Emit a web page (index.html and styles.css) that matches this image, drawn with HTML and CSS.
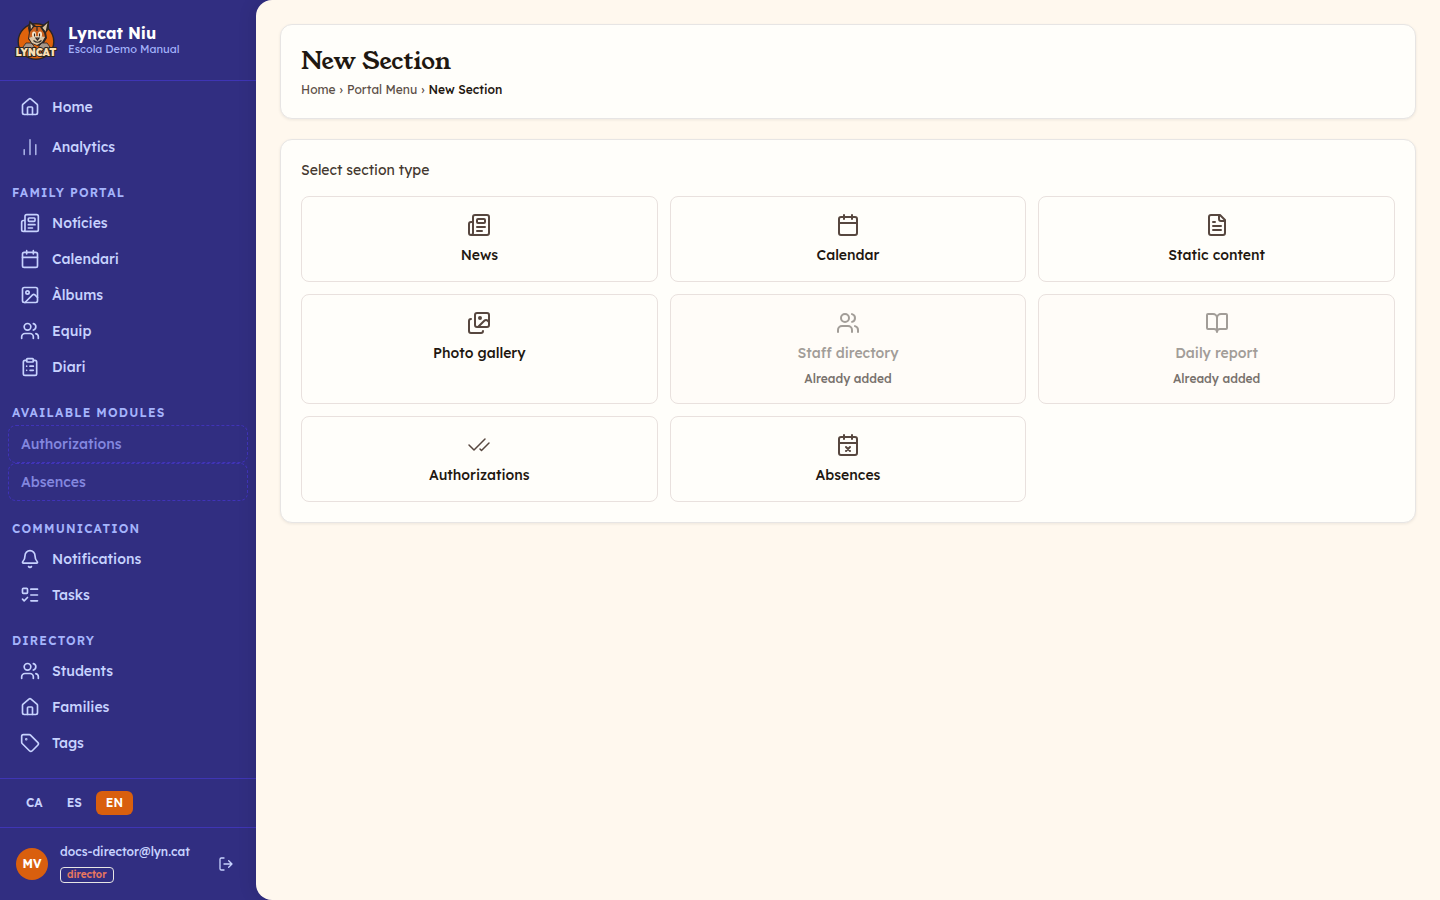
FILE: index.html
```html
<!DOCTYPE html>
<html lang="en">
<head>
    <meta charset="UTF-8">
    <meta name="viewport" content="width=device-width, initial-scale=1.0">
    <title>New Section - Lyncat Niu</title>
    <link rel="stylesheet" href="styles.css">
</head>
<body>
    <!-- Icon set -->
    <svg class="sprite" aria-hidden="true">
        <symbol id="i-home" viewBox="0 0 24 24"><path d="M15 21v-8a1 1 0 0 0-1-1h-4a1 1 0 0 0-1 1v8"/><path d="M3 10a2 2 0 0 1 .709-1.528l7-6a2 2 0 0 1 2.582 0l7 6A2 2 0 0 1 21 10v9a2 2 0 0 1-2 2H5a2 2 0 0 1-2-2z"/></symbol>
        <symbol id="i-chart" viewBox="0 0 24 24"><path stroke-width="1.5" d="M5 21v-6M12 21V3M19 21V9"/></symbol>
        <symbol id="i-news" viewBox="0 0 24 24"><path d="M15 18h-5M18 14h-8"/><path d="M4 22h16a2 2 0 0 0 2-2V4a2 2 0 0 0-2-2H8a2 2 0 0 0-2 2v16a2 2 0 0 1-4 0v-9a2 2 0 0 1 2-2h2"/><rect width="8" height="4" x="10" y="6" rx="1"/></symbol>
        <symbol id="i-calendar" viewBox="0 0 24 24"><path d="M8 2v4M16 2v4M3 10h18"/><rect width="18" height="18" x="3" y="4" rx="2"/></symbol>
        <symbol id="i-calendar-x" viewBox="0 0 24 24"><path d="M8 2v4M16 2v4M3 10h18M14 14l-4 4M10 14l4 4"/><rect width="18" height="18" x="3" y="4" rx="2"/></symbol>
        <symbol id="i-image" viewBox="0 0 24 24"><rect width="18" height="18" x="3" y="3" rx="2"/><circle cx="9" cy="9" r="2"/><path d="m21 15-3.086-3.086a2 2 0 0 0-2.828 0L6 21"/></symbol>
        <symbol id="i-images" viewBox="0 0 24 24"><path d="m22 11-1.296-1.296a2.4 2.4 0 0 0-3.408 0L11 16"/><path d="M4 8a2 2 0 0 0-2 2v10a2 2 0 0 0 2 2h10a2 2 0 0 0 2-2"/><circle cx="13" cy="7" r="1" fill="currentColor"/><rect width="14" height="14" x="8" y="2" rx="2"/></symbol>
        <symbol id="i-users" viewBox="0 0 24 24"><path d="M16 21v-2a4 4 0 0 0-4-4H6a4 4 0 0 0-4 4v2"/><path d="M16 3.128a4 4 0 0 1 0 7.744M22 21v-2a4 4 0 0 0-3-3.87"/><circle cx="9" cy="7" r="4"/></symbol>
        <symbol id="i-clipboard" viewBox="0 0 24 24"><rect width="8" height="4" x="8" y="2" rx="1"/><path d="M16 4h2a2 2 0 0 1 2 2v14a2 2 0 0 1-2 2H6a2 2 0 0 1-2-2V6a2 2 0 0 1 2-2h2M12 11h4M12 16h4M8 11h.01M8 16h.01"/></symbol>
        <symbol id="i-bell" viewBox="0 0 24 24"><path d="M10.268 21a2 2 0 0 0 3.464 0"/><path d="M3.262 15.326A1 1 0 0 0 4 17h16a1 1 0 0 0 .74-1.673C19.41 13.956 18 12.499 18 8A6 6 0 0 0 6 8c0 4.499-1.411 5.956-2.738 7.326"/></symbol>
        <symbol id="i-tasks" viewBox="0 0 24 24"><path d="M13 5h8M13 12h8M13 19h8M3 17l2 2 4-4"/><rect width="6" height="6" x="3" y="4" rx="1"/></symbol>
        <symbol id="i-tag" viewBox="0 0 24 24"><path d="M12.586 2.586A2 2 0 0 0 11.172 2H4a2 2 0 0 0-2 2v7.172a2 2 0 0 0 .586 1.414l8.704 8.704a2.426 2.426 0 0 0 3.42 0l6.58-6.58a2.426 2.426 0 0 0 0-3.42z"/><circle cx="7.5" cy="7.5" r=".5" fill="currentColor"/></symbol>
        <symbol id="i-file" viewBox="0 0 24 24"><path d="M15 2H6a2 2 0 0 0-2 2v16a2 2 0 0 0 2 2h12a2 2 0 0 0 2-2V7Z"/><path d="M14 2v4a2 2 0 0 0 2 2h4M10 9H8M16 13H8M16 17H8"/></symbol>
        <symbol id="i-book" viewBox="0 0 24 24"><path d="M12 7v14M3 18a1 1 0 0 1-1-1V4a1 1 0 0 1 1-1h5a4 4 0 0 1 4 4 4 4 0 0 1 4-4h5a1 1 0 0 1 1 1v13a1 1 0 0 1-1 1h-6a3 3 0 0 0-3 3 3 3 0 0 0-3-3z"/></symbol>
        <symbol id="i-checks" viewBox="0 0 24 24"><path stroke-width="1.5" d="M18 6 7 17l-5-5M22 10l-7.5 7.5L13 16"/></symbol>
        <symbol id="i-logout" viewBox="0 0 24 24"><path d="M9 21H5a2 2 0 0 1-2-2V5a2 2 0 0 1 2-2h4M16 17l5-5-5-5M21 12H9"/></symbol>
    </svg>

    <div class="app">
        <aside class="sidebar">
            <div class="brand">
                <svg class="logo" viewBox="0 0 40 40" role="img" aria-label="Lyncat">
                    <circle cx="20" cy="21.5" r="17.8" fill="#e0630c" stroke="#2b2523" stroke-width="1.4"/>
                    <!-- ears -->
                    <path d="M13.5.5 20 6l-7 7-1-5zM33 .5 24 7l5 7 4-5z" fill="#2b2523"/>
                    <path d="m14.5 3.5 3.5 4-3 3zM31.5 3l-5.5 5 3.5 4z" fill="#d8c0a0"/>
                    <!-- head -->
                    <path d="M17 6h8l5 6 1 6-3 5-6 3-6-2-4-5 1-7z" fill="#2b2523"/>
                    <path d="M18 7h6l4 6 1 4-3 4-5 3-5-2-3-4 1-6z" fill="#c9621f"/>
                    <path d="m13 18 5-2h5l6 1-3 5-5 3-5-2z" fill="#d9c4a6"/>
                    <ellipse cx="18" cy="14.5" rx="2" ry="3" fill="#f8e9cf"/>
                    <ellipse cx="24" cy="14.5" rx="2" ry="3" fill="#f8e9cf"/>
                    <path d="M18.5 13.5v3M23.5 13.5v3M20 18h3l-1.500 2zM17.5 20.5q4 3.500 8 0M21 7v4" fill="none" stroke="#2b2523" stroke-width="1.2"/>
                    <!-- paws -->
                    <path d="m7 27 3-4 5 0 3 3v3H7zM23 26l3-3h5l3 4v2H23z" fill="#a49588" stroke="#2b2523" stroke-width=".8"/>
                    <text class="logo-text" x="20" y="36" text-anchor="middle">LYNCAT</text>
                </svg>
                <div>
                    <div class="brand-name">Lyncat Niu</div>
                    <div class="brand-school">Escola Demo Manual</div>
                </div>
            </div>

            <nav class="nav">
                <div class="nav-group nav-main">
                    <a class="nav-link" href="#"><svg class="icon"><use href="#i-home"/></svg>Home</a>
                    <a class="nav-link" href="#"><svg class="icon"><use href="#i-chart"/></svg>Analytics</a>
                </div>
                <h2 class="nav-title">Family portal</h2>
                <div class="nav-group">
                    <a class="nav-link" href="#"><svg class="icon"><use href="#i-news"/></svg>Notícies</a>
                    <a class="nav-link" href="#"><svg class="icon"><use href="#i-calendar"/></svg>Calendari</a>
                    <a class="nav-link" href="#"><svg class="icon"><use href="#i-image"/></svg>Àlbums</a>
                    <a class="nav-link" href="#"><svg class="icon"><use href="#i-users"/></svg>Equip</a>
                    <a class="nav-link" href="#"><svg class="icon"><use href="#i-clipboard"/></svg>Diari</a>
                </div>
                <h2 class="nav-title">Available modules</h2>
                <div class="nav-group">
                    <a class="nav-link module" href="#">Authorizations</a>
                    <a class="nav-link module" href="#">Absences</a>
                </div>
                <h2 class="nav-title">Communication</h2>
                <div class="nav-group">
                    <a class="nav-link" href="#"><svg class="icon"><use href="#i-bell"/></svg>Notifications</a>
                    <a class="nav-link" href="#"><svg class="icon"><use href="#i-tasks"/></svg>Tasks</a>
                </div>
                <h2 class="nav-title">Directory</h2>
                <div class="nav-group">
                    <a class="nav-link" href="#"><svg class="icon"><use href="#i-users"/></svg>Students</a>
                    <a class="nav-link" href="#"><svg class="icon"><use href="#i-home"/></svg>Families</a>
                    <a class="nav-link" href="#"><svg class="icon"><use href="#i-tag"/></svg>Tags</a>
                </div>
            </nav>

            <div class="languages">
                <button type="button" class="lang">CA</button>
                <button type="button" class="lang">ES</button>
                <button type="button" class="lang active">EN</button>
            </div>

            <div class="user">
                <div class="avatar">MV</div>
                <div class="user-info">
                    <div class="user-email">docs-director@lyn.cat</div>
                    <span class="role">director</span>
                </div>
                <button type="button" class="logout" aria-label="Log out"><svg class="icon"><use href="#i-logout"/></svg></button>
            </div>
        </aside>

        <main class="content">
            <header class="card">
                <h1>New Section</h1>
                <nav class="breadcrumb" aria-label="Breadcrumb">
                    <a href="#">Home</a>
                    <span>›</span>
                    <a href="#">Portal Menu</a>
                    <span>›</span>
                    <span class="current">New Section</span>
                </nav>
            </header>

            <section class="card">
                <p class="prompt">Select section type</p>
                <div class="tiles">
                    <button type="button" class="tile"><svg class="icon"><use href="#i-news"/></svg><span class="tile-name">News</span></button>
                    <button type="button" class="tile"><svg class="icon"><use href="#i-calendar"/></svg><span class="tile-name">Calendar</span></button>
                    <button type="button" class="tile"><svg class="icon"><use href="#i-file"/></svg><span class="tile-name">Static content</span></button>
                    <button type="button" class="tile"><svg class="icon"><use href="#i-images"/></svg><span class="tile-name">Photo gallery</span></button>
                    <button type="button" class="tile" disabled><svg class="icon"><use href="#i-users"/></svg><span class="tile-name">Staff directory</span><span class="tile-note">Already added</span></button>
                    <button type="button" class="tile" disabled><svg class="icon"><use href="#i-book"/></svg><span class="tile-name">Daily report</span><span class="tile-note">Already added</span></button>
                    <button type="button" class="tile"><svg class="icon"><use href="#i-checks"/></svg><span class="tile-name">Authorizations</span></button>
                    <button type="button" class="tile"><svg class="icon"><use href="#i-calendar-x"/></svg><span class="tile-name">Absences</span></button>
                </div>
            </section>
        </main>
    </div>
</body>
</html>
```
FILE: styles.css
```css
* {
    box-sizing: border-box;
}
body {
    margin: 0;
    font-family: Lexend, Inter, "Open Sans", sans-serif;
    font-size: 14px;
    line-height: 20px;
    color: #1f1811;
    background-color: #312e81;
}
h1, h2, p {
    margin: 0;
}
a {
    color: inherit;
    text-decoration: none;
}
button {
    font: inherit;
    color: inherit;
    cursor: pointer;
}
.sprite {
    display: none;
}
.icon {
    display: block;
    flex-shrink: 0;
    width: 20px;
    height: 20px;
    fill: none;
    stroke: currentColor;
    stroke-width: 2;
    stroke-linecap: round;
    stroke-linejoin: round;
}
.app {
    display: flex;
    height: 100vh;
}

/* Sidebar */
.sidebar {
    display: flex;
    flex-direction: column;
    flex-shrink: 0;
    width: 256px;
    color: #c7d2fe;
}
.brand {
    display: flex;
    align-items: center;
    gap: 12px;
    padding: 20px 16px;
    border-bottom: 1px solid #3f35b5;
}
.logo {
    display: block;
    width: 40px;
    height: 40px;
    overflow: visible;
}
.logo-text {
    font-size: 10px;
    font-weight: 900;
    fill: #fbe0b5;
    stroke: #2b2523;
    stroke-width: 2px;
    paint-order: stroke;
}
.brand-name {
    font-size: 16px;
    font-weight: 700;
    line-height: 18px;
    color: #fff;
}
.brand-school {
    font-size: 11px;
    line-height: 14px;
    color: #a5b4fc;
}
.nav {
    flex: 1;
    min-height: 0;
    overflow: hidden;
    padding: 8px;
}
.nav-group {
    display: flex;
    flex-direction: column;
}
.nav-main {
    gap: 4px;
}
.nav-title {
    margin: 20px 4px 4px;
    font-size: 12px;
    font-weight: 600;
    line-height: 16px;
    letter-spacing: 0.1em;
    text-transform: uppercase;
    color: #a5b4fc;
}
.nav-link {
    display: flex;
    align-items: center;
    gap: 12px;
    padding: 8px 12px;
    border-radius: 8px;
    font-weight: 500;
}
.module {
    border: 1px dashed #4033b8;
    color: #8387df;
}
.languages {
    display: flex;
    gap: 4px;
    padding: 12px 16px;
    border-top: 1px solid #3f35b5;
}
.lang {
    padding: 4px 10px;
    border: none;
    border-radius: 6px;
    background: none;
    font-size: 12px;
    font-weight: 600;
    line-height: 16px;
}
.lang.active {
    background-color: #d95f0e;
    color: #fff;
}
.user {
    display: flex;
    align-items: center;
    gap: 12px;
    padding: 12px 16px;
    height: 73px;
    border-top: 1px solid #3f35b5;
}
.avatar {
    display: flex;
    align-items: center;
    justify-content: center;
    width: 32px;
    height: 32px;
    border-radius: 50%;
    background-color: #d95f0e;
    font-size: 12px;
    font-weight: 700;
    color: #fff;
}
.user-info {
    flex: 1;
    min-width: 0;
    padding-bottom: 2px;
}
.user-email {
    margin-bottom: 7px;
    font-size: 12px;
    font-weight: 500;
    line-height: 16px;
}
.role {
    display: block;
    width: fit-content;
    padding: 0 6px;
    border: 1px solid #e7e5e4;
    border-radius: 4px;
    font-size: 10px;
    font-weight: 600;
    line-height: 14px;
    color: #e8775f;
}
.logout {
    padding: 6px;
    border: none;
    background: none;
}
.logout .icon {
    width: 16px;
    height: 16px;
}

/* Content */
.content {
    flex: 1;
    min-width: 0;
    overflow: auto;
    padding: 24px;
    border-radius: 16px 0 0 16px;
    background-color: #fff8ee;
    box-shadow: -4px 0 16px rgba(0, 0, 0, 0.08);
}
.card {
    margin-bottom: 20px;
    padding: 20px;
    border: 1px solid #e7e5e4;
    border-radius: 12px;
    background-color: #fffefa;
    box-shadow: 0 1px 3px rgba(28, 25, 23, 0.08);
}
h1 {
    font-family: "Young Serif", "Liberation Serif", serif;
    font-size: 24px;
    font-weight: 600;
    line-height: 32px;
}
.breadcrumb {
    display: flex;
    gap: 4px;
    margin-top: 4px;
    font-size: 12px;
    line-height: 17px;
    color: #5c4f47;
}
.current {
    font-weight: 500;
    color: #1f1811;
}
.prompt {
    margin-bottom: 16px;
    color: #44382f;
}
.tiles {
    display: grid;
    grid-template-columns: repeat(3, 1fr);
    gap: 12px;
}
.tile {
    display: flex;
    flex-direction: column;
    align-items: center;
    gap: 8px;
    padding: 16px;
    border: 1px solid #e9e1de;
    border-radius: 8px;
    background-color: #fffefa;
}
.tile .icon {
    width: 24px;
    height: 24px;
    color: #57473f;
}
.tile-name {
    font-weight: 500;
}
.tile-note {
    font-size: 12px;
    font-weight: 500;
    line-height: 16px;
    color: #78716c;
}
.tile:disabled {
    background-color: #fffcf8;
    cursor: not-allowed;
}
.tile:disabled .icon,
.tile:disabled .tile-name {
    color: #a29d98;
}
```
